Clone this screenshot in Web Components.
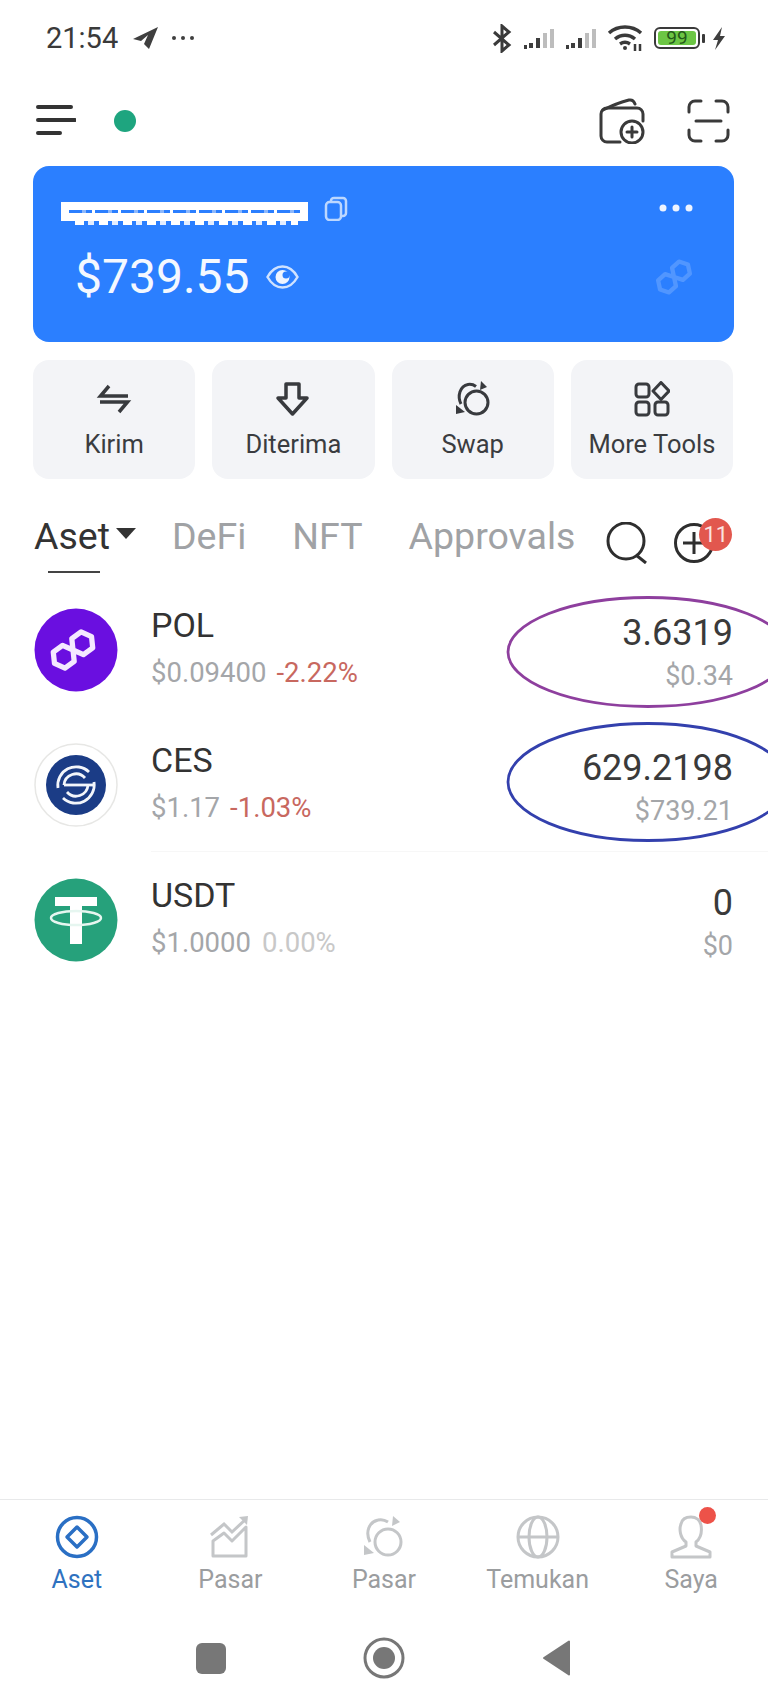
<!DOCTYPE html>
<html lang="id">
<head>
<meta charset="utf-8">
<title>Aset</title>
<style>
    html, body { margin: 0; background: #fff; }
    body { font-family: Roboto, 'Liberation Sans', sans-serif; color: #333; }
    wallet-page { width: 768px; height: 1707px; }
</style>
</head>
<body>
<wallet-page>
    <status-bar></status-bar>
    <top-bar></top-bar>
    <wallet-card amount="$739.55"></wallet-card>
    <action-row>
        <action-tile icon="send" label="Kirim"></action-tile>
        <action-tile icon="receive" label="Diterima"></action-tile>
        <action-tile icon="swap" label="Swap"></action-tile>
        <action-tile icon="tools" label="More Tools"></action-tile>
    </action-row>
    <asset-tabs></asset-tabs>
    <asset-row coin="pol" name="POL" price="$0.09400" change="-2.22%" tone="down" amount="3.6319" value="$0.34" mark="#8e3f9e"></asset-row>
    <asset-row coin="ces" name="CES" price="$1.17" change="-1.03%" tone="down" amount="629.2198" value="$739.21" mark="#3340ad" line></asset-row>
    <asset-row coin="usdt" name="USDT" price="$1.0000" change="0.00%" tone="flat" amount="0" value="$0"></asset-row>
    <bottom-nav></bottom-nav>
    <system-nav></system-nav>
</wallet-page>

<script>
// two hexagons touching at the origin, rotated by whoever uses it
const POLY_PATH = 'M0 0L-6.500 11.300H-19.500L-26 0-19.500-11.300H-6.500L0 0 6.500 11.300H19.500L26 0 19.500-11.300H6.500z';

const ICONS = {
    send: `<svg width="36" height="36" viewBox="0 0 36 36" fill="none" stroke="#383a3e" stroke-width="3.500">
        <path d="M32 15H4.500L13 5"/><path d="M4 21h27.500L23 31"/></svg>`,
    receive: `<svg width="36" height="36" viewBox="0 0 36 36" fill="none" stroke="#383a3e" stroke-width="3.500" stroke-linejoin="round">
        <path d="M11 3h13v14h8L17.500 33 3 17h8z"/></svg>`,
    swap: `<svg width="38" height="38" viewBox="0 0 38 38" fill="none" stroke="#383a3e" stroke-width="3">
        <circle cx="22.500" cy="22.500" r="11.500"/><path d="M7 24C3 16 6 6 14 4.500c3-.5 6 .5 8 2"/>
        <path d="M27 1l-1 9 7-3z" fill="#383a3e" stroke="none"/><path d="M2 25l9 7-9 2z" fill="#383a3e" stroke="none"/></svg>`,
    tools: `<svg width="36" height="36" viewBox="0 0 36 36" fill="none" stroke="#383a3e" stroke-width="3" stroke-linejoin="round">
        <rect x="2" y="3" width="13" height="13" rx="3"/><path d="M27 1.500l8 8.500-8 8.500-8-8.500z"/>
        <rect x="2" y="21" width="13" height="13" rx="3"/><rect x="21" y="21" width="13" height="13" rx="3"/></svg>`
};

class StatusBar extends HTMLElement {
    constructor() {
        super();
        this.attachShadow({mode: 'open'});
        const bars = `<path d="M2 19h3M9 15v5M16 10v10" stroke="#3d3d3d" stroke-width="4"/><path d="M23 5v15M30 1v19" stroke="#bdbdbd" stroke-width="4"/>`;
        this.shadowRoot.innerHTML = `
            <style>
                :host { display: flex; align-items: center; height: 76px; padding: 0 42px 0 46px; box-sizing: border-box; color: #3a3a3a; }
                .time { font-size: 29px; line-height: 34px; margin-right: 15px; }
                .plane { margin-right: 12px; }
                .more { margin-right: auto; }
                svg { display: block; flex: none; }
                .bt { margin-right: 10px; }
                .sig { margin-right: 8px; }
                .sig + .sig { margin-right: 9px; }
                .wifi { margin-right: 11px; }
                .batt { position: relative; width: 46px; height: 22px; border: 2px solid #3a3a3a; border-radius: 6px; box-sizing: border-box; padding: 2px; margin-right: 2px; }
                .batt b { display: block; height: 100%; border-radius: 3px; background: #6cc644; color: #24591a; font: 400 19px/14px Roboto, sans-serif; text-align: center; }
                .tip { width: 3px; height: 9px; background: #3a3a3a; margin-right: 7px; border-radius: 1px; }
            </style>
            <span class="time">21:54</span>
            <svg class="plane" width="26" height="22" viewBox="0 0 26 22"><path d="M25 0L0 12l8 2 7-6-4 9 5 5z" fill="#3f3f3f"/></svg>
            <svg class="more" width="24" height="6" viewBox="0 0 24 6" fill="#3f3f3f"><circle cx="3" cy="3" r="2"/><circle cx="12" cy="3" r="2"/><circle cx="21" cy="3" r="2"/></svg>
            <svg class="bt" width="20" height="29" viewBox="0 0 20 29" fill="none" stroke="#3a3a3a" stroke-width="3"><path d="M2 8l15 13-7 6V2l7 6L2 21"/></svg>
            <svg class="sig" width="34" height="21" viewBox="0 0 34 21" fill="none">${bars}</svg>
            <svg class="sig" width="34" height="21" viewBox="0 0 34 21" fill="none">${bars}</svg>
            <svg class="wifi" width="36" height="26" viewBox="0 0 36 26" fill="none" stroke="#3a3a3a" stroke-width="3.500">
                <path d="M2 8c9-8 23-8 32 0"/><path d="M8 14c6-5 14-5 20 0"/><path d="M13 19c3-2 7-2 10 0"/>
                <circle cx="18" cy="23" r="2" fill="#3a3a3a" stroke="none"/><path d="M28 19v7M33 19v7" stroke-width="2.500"/></svg>
            <div class="batt"><b>99</b></div>
            <div class="tip"></div>
            <svg width="14" height="23" viewBox="0 0 14 23"><path d="M10 0L1 13h5l-3 10 10-14H8z" fill="#3f3f3f"/></svg>
        `;
    }
}

class TopBar extends HTMLElement {
    constructor() {
        super();
        this.attachShadow({mode: 'open'});
        this.shadowRoot.innerHTML = `
            <style>
                :host { display: flex; align-items: center; height: 90px; padding: 0 38px 0 36px; box-sizing: border-box; }
                .dot { width: 22px; height: 22px; border-radius: 50%; background: #1ea57f; margin: 0 auto 0 38px; }
                svg { display: block; flex: none; }
                .wallet { margin-right: 42px; }
            </style>
            <svg width="40" height="32" viewBox="0 0 40 32" stroke="#333" stroke-width="4" stroke-linecap="round"><path d="M2 2h33M2 15h37M2 28h22"/></svg>
            <div class="dot"></div>
            <svg class="wallet" width="46" height="46" viewBox="0 0 46 46" fill="none" stroke="#3a3a3a" stroke-width="3" stroke-linecap="round">
                <path d="M21 44H8a6 6 0 0 1-6-6V16a6 6 0 0 1 6-6h30a6 6 0 0 1 6 6v7"/>
                <path d="M4 12c8-4 18-8 26-10 3-.5 5 1 6 4"/>
                <circle cx="33" cy="34" r="11"/><path d="M33 29v10M28 34h10"/></svg>
            <svg width="43" height="44" viewBox="0 0 43 44" fill="none" stroke="#3a3a3a" stroke-width="3" stroke-linecap="round">
                <path d="M14 2H8a6 6 0 0 0-6 6v5M29 2h6a6 6 0 0 1 6 6v5M14 42H8a6 6 0 0 1-6-6v-5M29 42h6a6 6 0 0 0 6-6v-5"/>
                <path d="M9 22h25"/></svg>
        `;
    }
}

class WalletCard extends HTMLElement {
    constructor() {
        super();
        this.attachShadow({mode: 'open'});
    }

    connectedCallback() {
        this.shadowRoot.innerHTML = `
            <style>
                :host { display: block; height: 176px; margin: 0 34px 0 33px; }
                .card { height: 100%; box-sizing: border-box; background: #2b7fff; border-radius: 16px; padding: 30px 41px 0 28px; color: #fff; }
                .head { display: flex; align-items: center; height: 24px; }
                .redact { position: relative; width: 247px; height: 19px; background: #fff; margin-top: 6px; margin-right: 16px; }
                .redact::before { content: ''; position: absolute; left: 8px; right: 8px; top: 8px; height: 3px; background: repeating-linear-gradient(90deg, #2b7fff 0 13px, #8db8fb 13px 17px, #2b7fff 17px 23px, #fff 23px 26px); }
                .redact::after { content: ''; position: absolute; left: 14px; right: 10px; top: 19px; height: 4px; background: repeating-linear-gradient(90deg, #fff 0 9px, #2b7fff 9px 13px, #e4eeff 13px 19px, #2b7fff 19px 24px); }
                .dots { margin-left: auto; }
                .total { display: flex; align-items: center; margin: 31px 0 0 14px; height: 52px; justify-content: flex-start; }
                .amount { font-size: 48px; line-height: 52px; color: #f4f8ff; margin-right: 16px; }
                .logo { margin-left: auto; margin-right: -1px; opacity: .3; }
                svg { display: block; flex: none; }
            </style>
            <div class="card">
                <div class="head">
                    <div class="redact"></div>
                    <svg width="24" height="25" viewBox="0 0 24 25" fill="none" stroke="#bcd7ff" stroke-width="2.500"><rect x="2" y="6" width="15" height="18" rx="3.500"/><path d="M7 6V4.500A3 3 0 0 1 10 2h9a3 3 0 0 1 3 3v12a3 3 0 0 1-3 3h-2"/></svg>
                    <svg class="dots" width="34" height="8" viewBox="0 0 34 8" fill="#eef4ff"><circle cx="4" cy="4" r="3.500"/><circle cx="17" cy="4" r="3.500"/><circle cx="30" cy="4" r="3.500"/></svg>
                </div>
                <div class="total">
                    <span class="amount">${this.getAttribute('amount')}</span>
                    <svg width="33" height="24" viewBox="0 0 33 24"><path d="M1.500 12C6 4 11 1.500 16.500 1.500S27 4 31.500 12C27 20 22 22.500 16.500 22.500S6 20 1.500 12z" fill="none" stroke="#cfe2ff" stroke-width="2.500"/><circle cx="16.500" cy="12" r="7" fill="#eef4ff"/><circle cx="20" cy="10" r="3.500" fill="#2b7fff"/></svg>
                    <svg class="logo" width="40" height="36" viewBox="-20 -18 40 36" fill="none" stroke="#a9ccff" stroke-width="6" stroke-linejoin="round"><path transform="rotate(-42) scale(.72)" d="${POLY_PATH}"/></svg>
                </div>
            </div>
        `;
    }
}

class ActionRow extends HTMLElement {
    constructor() {
        super();
        this.attachShadow({mode: 'open'});
        this.shadowRoot.innerHTML = `
            <style>
                :host { display: grid; grid-template-columns: repeat(4, 1fr); gap: 17px; margin: 18px 35px 0 33px; height: 119px; }
            </style>
            <slot></slot>
        `;
    }
}

class ActionTile extends HTMLElement {
    constructor() {
        super();
        this.attachShadow({mode: 'open'});
    }

    connectedCallback() {
        this.shadowRoot.innerHTML = `
            <style>
                :host { display: flex; flex-direction: column; align-items: center; background: #f3f4f7; border-radius: 16px; padding-top: 21px; box-sizing: border-box; }
                .icon { height: 36px; display: flex; align-items: center; }
                svg { display: block; }
                .label { font-size: 25.500px; line-height: 30px; margin-top: 12px; color: #3a3c40; white-space: nowrap; }
            </style>
            <div class="icon">${ICONS[this.getAttribute('icon')]}</div>
            <div class="label">${this.getAttribute('label')}</div>
        `;
    }
}

class AssetTabs extends HTMLElement {
    constructor() {
        super();
        this.attachShadow({mode: 'open'});
        this.shadowRoot.innerHTML = `
            <style>
                :host { display: flex; align-items: center; height: 103px; padding: 19px 0 0 34px; box-sizing: border-box; font-size: 37.500px; color: #a0a2a5; }
                span { line-height: 44px; white-space: nowrap; }
                .active { position: relative; color: #333; margin-right: 6px; margin-top: -8px; }
                .active::after { content: ''; position: absolute; left: 14px; width: 52px; top: 57px; height: 2px; background: #444; }
                .caret { width: 0; height: 0; border: 10px solid transparent; border-top: 11px solid #333; border-bottom: 0; margin-right: 36px; margin-top: -14px; }
                .tab { margin-top: -8px; margin-right: 46px; }
                .tab:nth-of-type(4) { margin-right: 31px; }
                .tools { position: relative; display: flex; align-items: center; margin-top: 6px; }
                svg { display: block; flex: none; }
                .badge { position: absolute; left: 93px; top: -4px; width: 33px; height: 33px; border-radius: 50%; background: #e2574e; color: #fbe4e1; font-size: 22px; line-height: 33px; text-align: center; }
            </style>
            <span class="active">Aset</span><div class="caret"></div>
            <span class="tab">DeFi</span><span class="tab">NFT</span><span class="tab">Approvals</span>
            <div class="tools">
                <svg width="43" height="42" viewBox="0 0 43 42" fill="none" stroke="#2e2e2e" stroke-width="3"><circle cx="20" cy="19" r="18"/><path d="M30 33l10 8"/></svg>
                <svg style="margin-left:25px" width="40" height="42" viewBox="0 0 40 42" fill="none" stroke="#2e2e2e" stroke-width="3"><circle cx="20" cy="21" r="18.500"/><path d="M20 10v22M9 21h22"/></svg>
                <div class="badge">11</div>
            </div>
        `;
    }
}

class AssetRow extends HTMLElement {
    constructor() {
        super();
        this.attachShadow({mode: 'open'});
    }

    coinIcon(coin) {
        if (coin === 'pol') {
            return `<svg width="84" height="84" viewBox="-42 -42 84 84"><circle r="41.500" fill="#6a0fe0"/><path transform="translate(-3 0) rotate(-36) scale(.88)" d="${POLY_PATH}" fill="none" stroke="#f4e9ff" stroke-width="6" stroke-linejoin="round"/></svg>`;
        }
        if (coin === 'ces') {
            return `<svg width="84" height="84" viewBox="-42 -42 84 84" fill="none"><circle r="41" fill="#fff" stroke="#e7e7e5" stroke-width="1.500"/><circle r="30" fill="#1b3c86"/>
                <g stroke="#f3f6fb" stroke-width="2.800"><path d="M13-13A18.400 18.400 0 0 0-18 3"/><path d="M-13 13A18.400 18.400 0 0 0 18-3"/><path d="M9-7A12 12 0 0 0-12 0"/><path d="M-9 7A12 12 0 0 0 12 0"/><path d="M-12 0H18"/></g></svg>`;
        }
        return `<svg width="84" height="84" viewBox="-42 -42 84 84"><circle r="41.500" fill="#26a17b"/><path d="M-21-23h42v9H6v7H-6v-7h-15zM-6-7H6v31H-6z" fill="#fff"/><ellipse cy="-2" rx="25" ry="7" fill="none" stroke="#e6f6f0" stroke-width="2.500"/></svg>`;
    }

    connectedCallback() {
        const tone = this.getAttribute('tone');
        const mark = this.getAttribute('mark');
        const isCes = this.getAttribute('coin') === 'ces';
        const h = isCes ? 120 : 112;
        this.shadowRoot.innerHTML = `
            <style>
                :host { display: flex; align-items: center; position: relative; height: 135px; padding: 0 35px 0 34px; box-sizing: border-box; }
                svg { display: block; flex: none; }
                .main { flex: 1; margin-left: 33px; align-self: stretch; display: flex; flex-direction: column; padding-top: 24px; box-sizing: border-box; }
                .name { font-size: 34px; line-height: 38px; color: #333; }
                .sub { font-size: 27.500px; line-height: 32px; margin-top: 13px; color: #a4a6a9; white-space: nowrap; }
                .down { color: #c8685f; margin-left: 10px; }
                .flat { color: #c8c8c8; margin-left: 11px; }
                .right { text-align: right; align-self: stretch; padding-top: 30px; box-sizing: border-box; }
                .amount { font-size: 36px; line-height: 42px; color: #3a3a3a; }
                .value { font-size: 27px; line-height: 32px; margin-top: 6px; color: #a4a6a9; }
                .line { position: absolute; left: 151px; right: 0; bottom: 0; height: 1px; background: #f7f7f7; }
                .mark { position: absolute; left: 506px; overflow: hidden; pointer-events: none; }
                .mark.p { top: 14px; }
                .mark.c { top: 5px; }
            </style>
            ${this.coinIcon(this.getAttribute('coin'))}
            <div class="main">
                <div class="name">${this.getAttribute('name')}</div>
                <div class="sub">${this.getAttribute('price')}<span class="${tone}">${this.getAttribute('change')}</span></div>
            </div>
            <div class="right">
                <div class="amount">${this.getAttribute('amount')}</div>
                <div class="value">${this.getAttribute('value')}</div>
            </div>
            ${this.hasAttribute('line') ? '<div class="line"></div>' : ''}
            ${mark ? `<svg class="mark ${isCes ? 'c' : 'p'}" width="262" height="${h}" viewBox="0 0 262 ${h}"><ellipse cx="142" cy="${h / 2}" rx="140" ry="${h / 2 - 1.500}" fill="none" stroke="${mark}" stroke-width="2.800"/></svg>` : ''}
        `;
    }
}

class BottomNav extends HTMLElement {
    constructor() {
        super();
        this.attachShadow({mode: 'open'});
        const g = 'fill="none" stroke="#c4c6c8" stroke-width="3"';
        const items = [
            ['Aset', true, `<svg width="44" height="44" viewBox="0 0 44 44" fill="none" stroke="#2a6fc4" stroke-width="3.500"><circle cx="22" cy="22" r="19.500"/><path d="M22 12l10 10-10 10-10-10z" stroke-linejoin="round"/></svg>`],
            ['Pasar', false, `<svg width="44" height="44" viewBox="0 0 44 44" ${g}><path d="M5 41V26l11-8 8 8 14-14v29z" stroke-linejoin="round"/><path d="M3 20l13-11 8 8L38 4"/><path d="M31 2l9-1-1 9z" fill="#c4c6c8" stroke="none"/></svg>`],
            ['Pasar', false, `<svg width="44" height="44" viewBox="0 0 44 44" ${g}><circle cx="26" cy="27" r="13"/><path d="M8 27C3 17 7 7 16 5c4-1 7 0 10 2"/><path d="M31 1l-1 10 8-4zM2 30l10 8-10 2z" fill="#c4c6c8" stroke="none"/></svg>`],
            ['Temukan', false, `<svg width="44" height="44" viewBox="0 0 44 44" ${g}><circle cx="22" cy="22" r="20"/><ellipse cx="22" cy="22" rx="9" ry="20"/><path d="M2 22h40"/></svg>`],
            ['Saya', false, `<svg width="44" height="44" viewBox="0 0 44 44" ${g} stroke-linejoin="round"><path d="M17 27C11 23 10 14 12 9 13 4 17 2 22 2s9 3 10 8c1 6 0 13-5 17v4l14 6v5H3v-5l14-6z"/></svg><i></i>`]
        ];
        this.shadowRoot.innerHTML = `
            <style>
                :host { display: grid; grid-template-columns: repeat(5, 1fr); height: 122px; box-sizing: border-box; border-top: 1px solid #e8e9ea; padding-top: 15px; }
                .item { display: flex; flex-direction: column; align-items: center; position: relative; }
                svg { display: block; }
                .label { font-size: 25px; line-height: 30px; margin-top: 6px; color: #9b9d9f; }
                .on .label { color: #2f72c0; }
                .icon { position: relative; height: 44px; }
                i { position: absolute; left: 30px; top: -8px; width: 17px; height: 17px; border-radius: 50%; background: #ed5249; }
            </style>
            ${items.map(([label, on, icon]) => `
                <div class="item ${on ? 'on' : ''}"><div class="icon">${icon}</div><div class="label">${label}</div></div>
            `).join('')}
        `;
    }
}

class SystemNav extends HTMLElement {
    constructor() {
        super();
        this.attachShadow({mode: 'open'});
        this.shadowRoot.innerHTML = `
            <style>
                :host { display: flex; justify-content: center; align-items: center; gap: 137px; height: 86px; box-sizing: border-box; padding: 0 2px 12px 0; }
                svg { display: block; flex: none; }
            </style>
            <svg width="30" height="31" viewBox="0 0 30 31"><rect width="30" height="31" rx="6" fill="#777"/></svg>
            <svg width="42" height="42" viewBox="0 0 42 42" fill="none"><circle cx="21" cy="21" r="19" stroke="#777" stroke-width="3"/><circle cx="21" cy="21" r="11" fill="#777"/></svg>
            <svg width="28" height="36" viewBox="0 0 28 36"><path d="M27 1.500V34.500L2 18z" fill="#777" stroke="#777" stroke-width="2" stroke-linejoin="round"/></svg>
        `;
    }
}

class WalletPage extends HTMLElement {
    constructor() {
        super();
        this.attachShadow({mode: 'open'});
        this.shadowRoot.innerHTML = `
            <style>
                :host { display: flex; flex-direction: column; overflow: hidden; }
                ::slotted(bottom-nav) { margin-top: auto; }
            </style>
            <slot></slot>
        `;
    }
}

customElements.define('status-bar', StatusBar);
customElements.define('top-bar', TopBar);
customElements.define('wallet-card', WalletCard);
customElements.define('action-row', ActionRow);
customElements.define('action-tile', ActionTile);
customElements.define('asset-tabs', AssetTabs);
customElements.define('asset-row', AssetRow);
customElements.define('bottom-nav', BottomNav);
customElements.define('system-nav', SystemNav);
customElements.define('wallet-page', WalletPage);
</script>
</body>
</html>
